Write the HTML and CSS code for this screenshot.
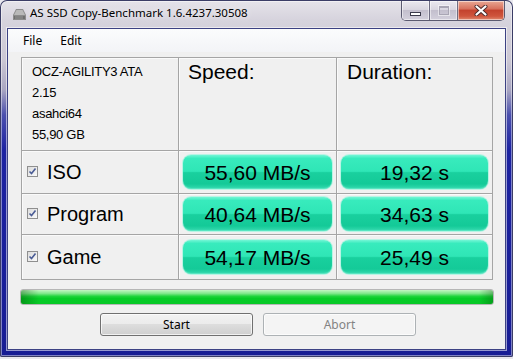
FILE: index.html
```html
<!DOCTYPE html>
<html lang="en">
<head>
    <meta charset="UTF-8">
    <title>AS SSD Copy-Benchmark 1.6.4237.30508</title>
    <link rel="stylesheet" href="styles.css">
</head>
<body>

    <div class="window">
        <div class="titlebar">
            <svg class="app-icon" width="13" height="11" viewBox="0 0 13 11">
                <polygon points="3,0 10,0 13,6 13,11 0,11 0,6" fill="#8c8c8c"/>
                <polygon points="3.5,1 9.5,1 12,6 1,6" fill="#b9b9b9"/>
                <rect x="1" y="7" width="11" height="3" fill="#6f6f6f"/>
                <path d="M3 7v3M5 7v3M7 7v3M9 7v3" stroke="#a5a5a5" stroke-width="0.8"/>
            </svg>
            <span class="title">AS SSD Copy-Benchmark 1.6.4237.30508</span>
            <div class="caption-buttons">
                <div class="cap cap-min"><span class="glyph-min"></span></div>
                <div class="cap cap-max"><span class="glyph-max"></span></div>
                <div class="cap cap-close">
                    <svg width="14" height="11" viewBox="0 0 14 11">
                        <path d="M2.5 1.5l9 8M11.5 1.5l-9 8" stroke="#4a2a2a" stroke-width="4" stroke-linecap="round"/>
                        <path d="M2.5 1.5l9 8M11.5 1.5l-9 8" stroke="#ffffff" stroke-width="2.2" stroke-linecap="round"/>
                    </svg>
                </div>
            </div>
        </div>

        <div class="client">
            <div class="menubar">
                <span class="menu-item">File</span>
                <span class="menu-item">Edit</span>
            </div>

            <div class="content">
                <div class="results">
                    <div class="cell device">
                        <div>OCZ-AGILITY3 ATA</div>
                        <div>2.15</div>
                        <div>asahci64</div>
                        <div>55,90 GB</div>
                    </div>
                    <div class="cell heading">Speed:</div>
                    <div class="cell heading heading-duration">Duration:</div>

                    <div class="cell test"><span class="check"></span>ISO</div>
                    <div class="cell value"><div class="pill">55,60 MB/s</div></div>
                    <div class="cell value"><div class="pill">19,32 s</div></div>

                    <div class="cell test"><span class="check"></span>Program</div>
                    <div class="cell value"><div class="pill">40,64 MB/s</div></div>
                    <div class="cell value"><div class="pill">34,63 s</div></div>

                    <div class="cell test"><span class="check"></span>Game</div>
                    <div class="cell value"><div class="pill">54,17 MB/s</div></div>
                    <div class="cell value"><div class="pill">25,49 s</div></div>
                </div>

                <div class="progress"><div class="progress-fill"></div></div>

                <div class="actions">
                    <button type="button" class="btn">Start</button>
                    <button type="button" class="btn" disabled>Abort</button>
                </div>
            </div>
        </div>
    </div>

</body>
</html>
```

FILE: styles.css
```css
/* Windows 7 style benchmark window */
body {
    margin: 0;
    background: #e9e8ee;
    font-family: "Noto Sans", "Liberation Sans", sans-serif;
}

.window {
    width: 513px;
    height: 357px;
    box-sizing: border-box;
    padding: 0 8px;
    border-radius: 7px 7px 2px 2px;
    background: linear-gradient(to bottom, #e6e4ea 0, #d6d3dd 20px, #cbc7d4 60px, #a9a6c2 90px, #4b50ae 115px, #1d23a2 150px, #171c94 100%);
    box-shadow: inset 0 0 0 1px #3b3d66, inset 0 0 0 2px rgba(255, 255, 255, 0.45);
}

.titlebar {
    height: 29px;
    display: flex;
    align-items: flex-start;
    padding-left: 5px;
}

.app-icon {
    margin-top: 9px;
}

.title {
    margin-left: 4px;
    margin-top: 5px;
    font-size: 11.5px;
    color: #000;
    text-shadow: 0 0 6px rgba(255, 255, 255, 0.9);
}

.caption-buttons {
    margin-left: auto;
    margin-top: 1px;
    display: flex;
    height: 19px;
    border: 1px solid #5b5a70;
    border-top: none;
    border-radius: 0 0 5px 5px;
    overflow: hidden;
}

.cap {
    width: 27px;
    display: flex;
    align-items: center;
    justify-content: center;
    background: linear-gradient(to bottom, #ebe9ef 0, #d9d6e0 45%, #c3bfcd 50%, #d3d0dc 100%);
    box-shadow: inset 0 0 0 1px rgba(255, 255, 255, 0.5);
}

.cap + .cap {
    border-left: 1px solid #6f6d82;
}

.cap-close {
    width: 46px;
    background: linear-gradient(to bottom, #e9a894 0, #d8735f 40%, #c4432e 50%, #cf553d 80%, #e08a70 100%);
}

.glyph-min {
    width: 9px;
    height: 2px;
    margin-top: 6px;
    background: #fff;
    border: 1px solid #3a3a4a;
}

.glyph-max {
    width: 8px;
    height: 6px;
    border: 1px solid #a9a6b4;
    border-top-width: 2px;
    box-shadow: 0 0 0 1px rgba(255, 255, 255, 0.5);
}

.client {
    height: 320px;
    background: #f0f0f0;
    box-shadow: 0 0 0 1px #3c4183, 0 0 0 2px rgba(255, 255, 255, 0.55);
}

.menubar {
    height: 23px;
    display: flex;
    align-items: center;
    padding-left: 6px;
    background: linear-gradient(to bottom, #fbfcfd, #f3f4f7);
    font-size: 12px;
    color: #000;
}

.menu-item {
    padding: 0 9px;
}

.content {
    padding: 5px 0 0 12px;
}

.results {
    margin-left: 1px;
    display: grid;
    grid-template-columns: 157px 158px 156px;
    grid-template-rows: 93px 43px 41px 45px;
    border-top: 1px solid #a5a5a5;
    border-left: 1px solid #a5a5a5;
    width: 471px;
}

.cell {
    border-right: 1px solid #a5a5a5;
    border-bottom: 1px solid #a5a5a5;
    box-shadow: inset 1px 1px 0 #fafafa;
}

.device {
    padding: 3px 0 0 10px;
    font-family: "Liberation Sans", Arial, sans-serif;
    font-size: 13px;
    line-height: 21px;
    color: #000;
    letter-spacing: -0.3px;
}

.heading {
    padding: 2px 0 0 9px;
    font-family: "Liberation Sans", Arial, sans-serif;
    font-size: 21px;
    line-height: 24px;
    color: #000;
}

.heading-duration {
    padding-left: 10px;
}

.test {
    display: flex;
    align-items: center;
    padding-left: 5px;
    font-family: "Liberation Sans", Arial, sans-serif;
    font-size: 20px;
    color: #000;
}

.check {
    width: 11px;
    height: 11px;
    box-sizing: border-box;
    margin-right: 9px;
    margin-top: -2px;
    border: 1px solid #8f8f8f;
    background:
        url("data:image/svg+xml,%3Csvg xmlns='http://www.w3.org/2000/svg' width='9' height='9'%3E%3Cpath d='M1.5 4.5l2 2 4-5' fill='none' stroke='%234a5c95' stroke-width='1.6'/%3E%3C/svg%3E") center / 9px 9px no-repeat,
        linear-gradient(135deg, #dcdcdc, #fafafa);
}

.value {
    display: flex;
    align-items: center;
    padding: 0 4px;
}

.pill {
    flex: 1;
    height: 34px;
    border-radius: 8px;
    display: flex;
    align-items: center;
    justify-content: center;
    padding-top: 2px;
    box-sizing: border-box;
    font-family: "Liberation Sans", Arial, sans-serif;
    font-size: 21px;
    color: #000;
    background: linear-gradient(to bottom, #74f6d6 0, #38ebbd 10%, #2fe6b6 48%, #19d09e 52%, #14ca98 85%, #36dbb0 100%);
    box-shadow: 0 0 0 1px #b8f4e4, inset 0 -1px 1px rgba(120, 240, 210, 0.6);
}

.progress {
    margin-top: 9px;
    width: 474px;
    height: 16px;
    box-sizing: border-box;
    border: 1px solid #b6b6b6;
    border-radius: 3px;
    background: #e6e6e6;
    overflow: hidden;
}

.progress-fill {
    height: 100%;
    background:
        linear-gradient(to right, rgba(0, 60, 0, 0.35) 0, rgba(0, 60, 0, 0) 18px, rgba(0, 60, 0, 0) calc(100% - 14px), rgba(0, 60, 0, 0.3) 100%),
        linear-gradient(to bottom, #c4f6c4 0, #7ee88a 25%, #1fd43c 45%, #06cc27 60%, #08c826 100%);
}

.actions {
    margin-top: 8px;
    padding-left: 80px;
    display: flex;
    gap: 10px;
}

.btn {
    width: 153px;
    height: 23px;
    border: 1px solid #707070;
    border-radius: 3px;
    font-family: "Noto Sans", "Liberation Sans", sans-serif;
    font-size: 12px;
    color: #000;
    background: linear-gradient(to bottom, #f2f2f2 0, #ebebeb 50%, #dddddd 50%, #cfcfcf 100%);
    box-shadow: inset 0 0 0 1px rgba(255, 255, 255, 0.7);
    padding: 0;
}

.btn:disabled {
    border-color: #adb2b5;
    color: #838383;
    background: #f4f4f4;
}
```
